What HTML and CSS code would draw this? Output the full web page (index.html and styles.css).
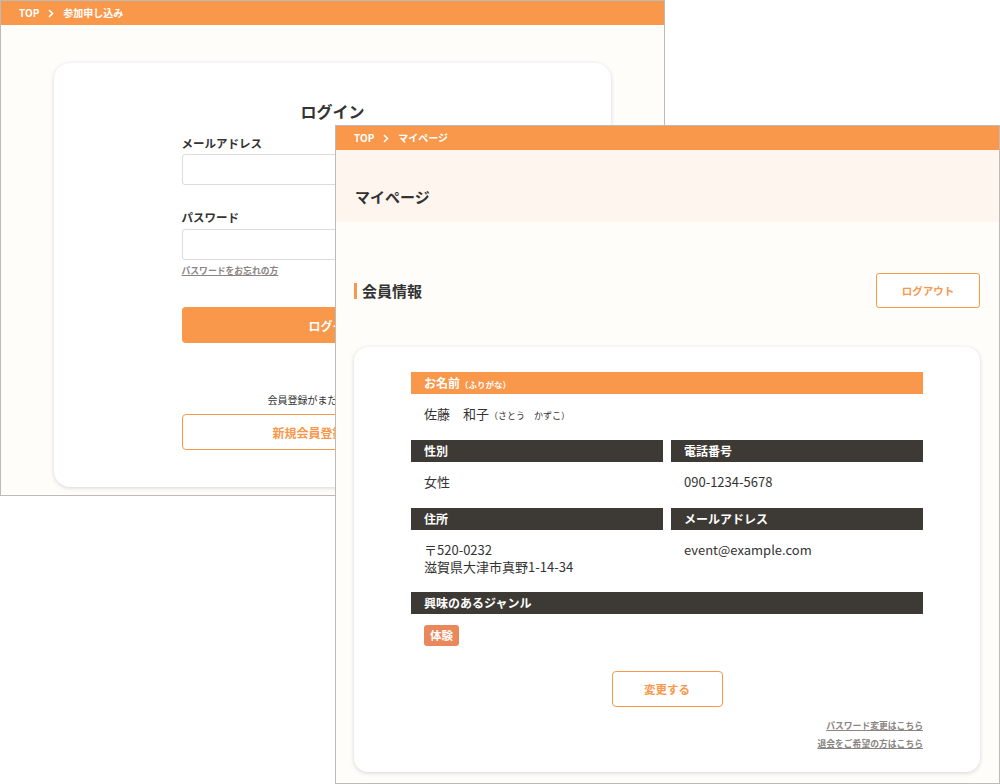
FILE: index.html
```html
<!DOCTYPE html>
<html lang="ja">
<head>
<meta charset="utf-8">
<title>マイページ</title>
<link rel="stylesheet" href="styles.css">
</head>
<body>
<div class="desktop">
  <section class="win win-back">
    <div class="crumb">
      <span>TOP</span>
      <svg class="chev" width="6" height="9" viewBox="0 0 6 9"><polyline points="1,1 4.5,4.5 1,8" fill="none" stroke="#fff" stroke-width="1.6"/></svg>
      <span>参加申し込み</span>
    </div>
    <div class="back-body">
      <div class="login-card">
        <h1 class="login-title">ログイン</h1>
        <div class="login-form">
          <div class="f-label">メールアドレス</div>
          <div class="f-input"></div>
          <div class="f-label f-label2">パスワード</div>
          <div class="f-input f-input2"></div>
          <a class="forgot">パスワードをお忘れの方</a>
          <div class="btn-login">ログイン</div>
          <p class="reg-note">会員登録がまだの方はこちら</p>
          <div class="btn-reg">新規会員登録はこちら</div>
        </div>
      </div>
    </div>
  </section>

  <section class="win win-front">
    <div class="crumb">
      <span>TOP</span>
      <svg class="chev" width="6" height="9" viewBox="0 0 6 9"><polyline points="1,1 4.5,4.5 1,8" fill="none" stroke="#fff" stroke-width="1.6"/></svg>
      <span>マイページ</span>
    </div>
    <div class="page-band"><h1 class="page-title">マイページ</h1></div>
    <div class="main">
      <div class="sec-head">
        <h2 class="sec-title">会員情報</h2>
        <div class="btn-logout">ログアウト</div>
      </div>
      <div class="info-card">
        <div class="item">
          <div class="bar bar-orange">お名前<small>（ふりがな）</small></div>
          <div class="val">佐藤　和子<small>（さとう　かずこ）</small></div>
        </div>
        <div class="grid2">
          <div class="item">
            <div class="bar">性別</div>
            <div class="val">女性</div>
          </div>
          <div class="item">
            <div class="bar">電話番号</div>
            <div class="val">090-1234-5678</div>
          </div>
          <div class="item">
            <div class="bar">住所</div>
            <div class="val val-multi">〒520-0232<br>滋賀県大津市真野1-14-34</div>
          </div>
          <div class="item">
            <div class="bar">メールアドレス</div>
            <div class="val">event@example.com</div>
          </div>
        </div>
        <div class="item item-last">
          <div class="bar">興味のあるジャンル</div>
          <div class="val"><span class="tag">体験</span></div>
        </div>
        <div class="actions">
          <div class="btn-edit">変更する</div>
        </div>
        <div class="links">
          <a>パスワード変更はこちら</a>
          <a>退会をご希望の方はこちら</a>
        </div>
      </div>
    </div>
  </section>
</div>
</body>
</html>
```

FILE: styles.css
```css
* { box-sizing: border-box; }
html, body {
  margin: 0;
  padding: 0;
  background: #ffffff;
}
body {
  font-family: "Noto Sans CJK JP", "Noto Sans", sans-serif;
  color: #333;
  width: 1000px;
  height: 784px;
  overflow: hidden;
}
.desktop {
  position: relative;
  width: 1000px;
  height: 784px;
}
.win {
  position: absolute;
  border: 1px solid #bdbbb8;
  background: #fffdf9;
  overflow: hidden;
  display: flex;
  flex-direction: column;
}
.win-back {
  left: 0;
  top: 0;
  width: 665px;
  height: 496px;
}
.win-front {
  left: 335px;
  top: 125px;
  width: 665px;
  height: 659px;
}
.crumb {
  height: 24px;
  flex: none;
  background: #f9974b;
  color: #fff;
  font-size: 10px;
  font-weight: 700;
  display: flex;
  align-items: center;
  gap: 9px;
  padding-left: 18px;
  line-height: 1;
}
.chev { display: block; }

/* back window */
.back-body {
  padding: 38px 53px 0;
}
.login-card {
  background: #fff;
  border-radius: 16px;
  box-shadow: 0 1px 4px rgba(0, 0, 0, 0.16);
  height: 424px;
  padding-top: 36px;
}
.login-title {
  margin: 0;
  text-align: center;
  font-size: 16px;
  line-height: 24px;
  font-weight: 700;
  color: #333;
}
.login-form {
  width: 302px;
  margin: 0 auto;
  display: flex;
  flex-direction: column;
}
.f-label {
  margin-top: 12px;
  font-size: 11.5px;
  line-height: 16px;
  font-weight: 700;
  color: #333;
}
.f-label2 { margin-top: 24px; }
.f-input {
  margin-top: 3px;
  height: 31px;
  border: 1px solid #dedcda;
  border-radius: 3px;
  background: #fff;
}
.f-input2 { margin-top: 4px; }
.forgot {
  margin-top: 4px;
  font-size: 8.8px;
  line-height: 14px;
  font-weight: 700;
  color: #8a8583;
  text-decoration: underline;
  align-self: flex-start;
}
.btn-login {
  margin-top: 29px;
  height: 36px;
  border-radius: 4px;
  background: #f9974b;
  color: #fff;
  font-size: 12px;
  font-weight: 700;
  display: flex;
  align-items: center;
  justify-content: center;
}
.reg-note {
  margin: 50px 0 0;
  font-size: 10px;
  line-height: 14px;
  text-align: center;
  color: #333;
}
.btn-reg {
  margin-top: 7px;
  height: 36px;
  border: 1px solid #f9974b;
  border-radius: 4px;
  background: #fff;
  color: #f9974b;
  font-size: 12px;
  font-weight: 700;
  display: flex;
  align-items: center;
  justify-content: center;
}

/* front window */
.page-band {
  flex: none;
  height: 72px;
  background: #fff5ef;
  padding: 37px 0 0 19px;
}
.page-title {
  margin: 0;
  font-size: 15px;
  line-height: 20px;
  font-weight: 700;
  color: #333;
}
.main {
  padding: 51px 19px 0 18px;
}
.sec-head {
  display: flex;
  align-items: center;
  justify-content: space-between;
  height: 35px;
}
.sec-title {
  margin: 0;
  font-size: 15px;
  line-height: 20px;
  font-weight: 700;
  color: #333;
  display: flex;
  align-items: center;
  gap: 5px;
}
.sec-title::before {
  content: "";
  width: 3px;
  height: 16px;
  background: #f9974b;
}
.btn-logout {
  width: 104px;
  height: 35px;
  border: 1px solid #f9974b;
  border-radius: 3px;
  background: #fff;
  color: #f9974b;
  font-size: 10.5px;
  font-weight: 700;
  display: flex;
  align-items: center;
  justify-content: center;
}
.info-card {
  margin-top: 39px;
  background: #fff;
  border-radius: 14px;
  box-shadow: 0 1px 4px rgba(0, 0, 0, 0.16);
  padding: 25px 57px 19px;
  display: flex;
  flex-direction: column;
}
.grid2 {
  display: grid;
  grid-template-columns: 1fr 1fr;
  column-gap: 8px;
}
.item {
  margin-bottom: 17px;
}
.item-last { margin-bottom: 0; }
.bar {
  height: 22px;
  background: #3d3935;
  color: #fff;
  font-size: 12px;
  font-weight: 700;
  line-height: 22px;
  padding-left: 13px;
}
.bar-orange { background: #f9974b; }
.bar small {
  font-size: 8.5px;
  font-weight: 700;
  line-height: 1;
}
.val {
  height: 29px;
  padding: 11px 13px 0;
  font-size: 13px;
  line-height: 18px;
  color: #333;
}
.val small {
  font-size: 9px;
  line-height: 1;
}
.val-multi {
  height: auto;
  line-height: 17px;
}
.tag {
  display: inline-block;
  height: 21px;
  padding: 0 6px;
  border-radius: 3px;
  background: #e9895b;
  color: #fff;
  font-size: 11.5px;
  font-weight: 700;
  line-height: 21px;
  vertical-align: top;
}
.item-last .val { height: 32px; }
.actions {
  margin-top: 25px;
  display: flex;
  justify-content: center;
}
.btn-edit {
  width: 111px;
  height: 36px;
  border: 1px solid #f9974b;
  border-radius: 4px;
  background: #fff;
  color: #f9974b;
  font-size: 11.5px;
  font-weight: 700;
  display: flex;
  align-items: center;
  justify-content: center;
}
.links {
  margin-top: 10px;
  display: flex;
  flex-direction: column;
  align-items: flex-end;
}
.links a {
  font-size: 8.8px;
  line-height: 18px;
  font-weight: 700;
  color: #8a8583;
  text-decoration: underline;
}
```
